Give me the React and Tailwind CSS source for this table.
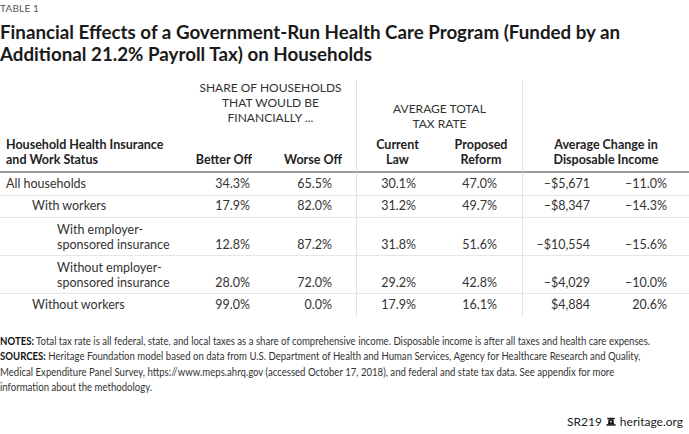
const rows = [
  { label: ['All households'], indent: 'pl-[6px]', v: ['34.3%', '65.5%', '30.1%', '47.0%', '–$5,671', '–11.0%'] },
  { label: ['With workers'], indent: 'pl-[32px]', v: ['17.9%', '82.0%', '31.2%', '49.7%', '–$8,347', '–14.3%'] },
  { label: ['With employer-', 'sponsored insurance'], indent: 'pl-[57px]', v: ['12.8%', '87.2%', '31.8%', '51.6%', '–$10,554', '–15.6%'] },
  { label: ['Without employer-', 'sponsored insurance'], indent: 'pl-[57px]', v: ['28.0%', '72.0%', '29.2%', '42.8%', '–$4,029', '–10.0%'] },
  { label: ['Without workers'], indent: 'pl-[32px]', v: ['99.0%', '0.0%', '17.9%', '16.1%', '$4,884', '20.6%'] },
];

// right padding per value column, so numbers line up where the reference puts them
const pads = ['pr-[12px]', 'pr-[24px]', 'pr-[12px]', 'pr-[25px]', 'pr-[12px]', 'pr-[22px]'];
const dividers = ['', 'border-r border-r-[#e2e2e2]', '', 'border-r border-r-[#e2e2e2]', '', ''];

function Bell() {
  return (
    <svg viewBox="0 0 12 12" className="h-[10px] w-[10px]" fill="#111">
      <rect x="1.5" y="1" width="9" height="1.6" />
      <path d="M3 2.6h6l0.6 6h-7.2z" />
      <circle cx="6" cy="5.6" r="1" fill="#fff" />
      <rect x="0.5" y="8.6" width="11" height="1.8" />
    </svg>
  );
}

export default function App() {
  return (
    <div className="h-[434px] w-[689px] overflow-hidden bg-white font-['Lato',sans-serif] text-[#222]">
      <p className="pt-[2px] text-[10px] leading-[12px] tracking-[0.02em] text-[#555]">TABLE 1</p>
      <h1 className="mt-[7px] text-[18.75px] font-bold leading-[22px] text-[#1a1a1a]">
        Financial Effects of a Government-Run Health Care Program (Funded by an
        <br />
        Additional 21.2% Payroll Tax) on Households
      </h1>

      <div className="mt-[15px] grid grid-cols-[185px_77px_95px_71px_95px_79px_87px] text-[12.5px]">
        {/* group headers */}
        <div></div>
        <div className="col-span-2 border-r border-r-[#e2e2e2] pb-[6px] text-center text-[12px] uppercase leading-[15px] text-[#333]">
          Share of households
          <br />
          that would be
          <br />
          financially ...
        </div>
        <div className="col-span-2 flex flex-col justify-end border-r border-r-[#e2e2e2] text-center text-[12px] uppercase leading-[15px] text-[#333]">
          <span>Average total</span>
          <span>tax rate</span>
        </div>
        <div className="col-span-2"></div>

        {/* column headers */}
        <div className="border-b-2 border-b-[#9a9a9a] pb-[4px] pl-[6px] pt-[6px] font-bold leading-[15px]">
          Household Health Insurance
          <br />
          and Work Status
        </div>
        <div className="flex items-end justify-end border-b-2 border-b-[#9a9a9a] pb-[4px] pr-[10px] font-bold leading-[15px]">Better Off</div>
        <div className="flex items-end justify-end border-b-2 border-r border-b-[#9a9a9a] border-r-[#e2e2e2] pb-[4px] pr-[14px] font-bold leading-[15px]">Worse Off</div>
        <div className="flex items-end justify-center border-b-2 border-b-[#9a9a9a] pb-[4px] pl-[10px] text-center font-bold leading-[15px]">
          Current
          <br />
          Law
        </div>
        <div className="flex items-end justify-center border-b-2 border-r border-b-[#9a9a9a] border-r-[#e2e2e2] pb-[4px] pl-[12px] text-center font-bold leading-[15px]">
          Proposed
          <br />
          Reform
        </div>
        <div className="col-span-2 flex items-end justify-center border-b-2 border-b-[#9a9a9a] pb-[4px] text-center font-bold leading-[15px]">
          Average Change in
          <br />
          Disposable Income
        </div>

        {/* data rows */}
        {rows.map((r, i) => {
          const last = i === rows.length - 1;
          const line = last ? '' : 'border-b border-b-[#e6e6e6]';
          const lh = r.label.length > 1 ? 'leading-[15px]' : 'leading-[14.5px]';
          return (
            <div key={i} className="contents">
              <div className={`${r.indent} ${line} ${lh} py-[3.5px] text-[#333]`}>
                {r.label.map((t) => (
                  <div key={t}>{t}</div>
                ))}
              </div>
              {r.v.map((val, j) => (
                <div
                  key={j}
                  className={`flex items-end justify-end ${pads[j]} ${line} ${dividers[j]} ${lh} py-[3.5px] text-[#333]`}
                >
                  {val}
                </div>
              ))}
            </div>
          );
        })}
      </div>

      <div className="mt-[17px] w-[790px] origin-left scale-x-[0.872] whitespace-nowrap text-[11px] leading-[15.6px] text-[#333]">
        <p>
          <b className="font-bold text-[#111]">NOTES:</b> Total tax rate is all federal, state, and local taxes as a share of comprehensive income. Disposable income is after all taxes and health care expenses.
        </p>
        <p>
          <b className="font-bold text-[#111]">SOURCES:</b> Heritage Foundation model based on data from U.S. Department of Health and Human Services, Agency for Healthcare Research and Quality,
        </p>
        <p>Medical Expenditure Panel Survey, https://www.meps.ahrq.gov (accessed October 17, 2018), and federal and state tax data. See appendix for more</p>
        <p>information about the methodology.</p>
      </div>

      <div className="mt-[19px] flex items-center justify-end gap-[4px] pr-[6px] text-[12px] leading-[16px] text-[#222]">
        <span>SR219</span>
        <Bell />
        <span>heritage.org</span>
      </div>
    </div>
  );
}
